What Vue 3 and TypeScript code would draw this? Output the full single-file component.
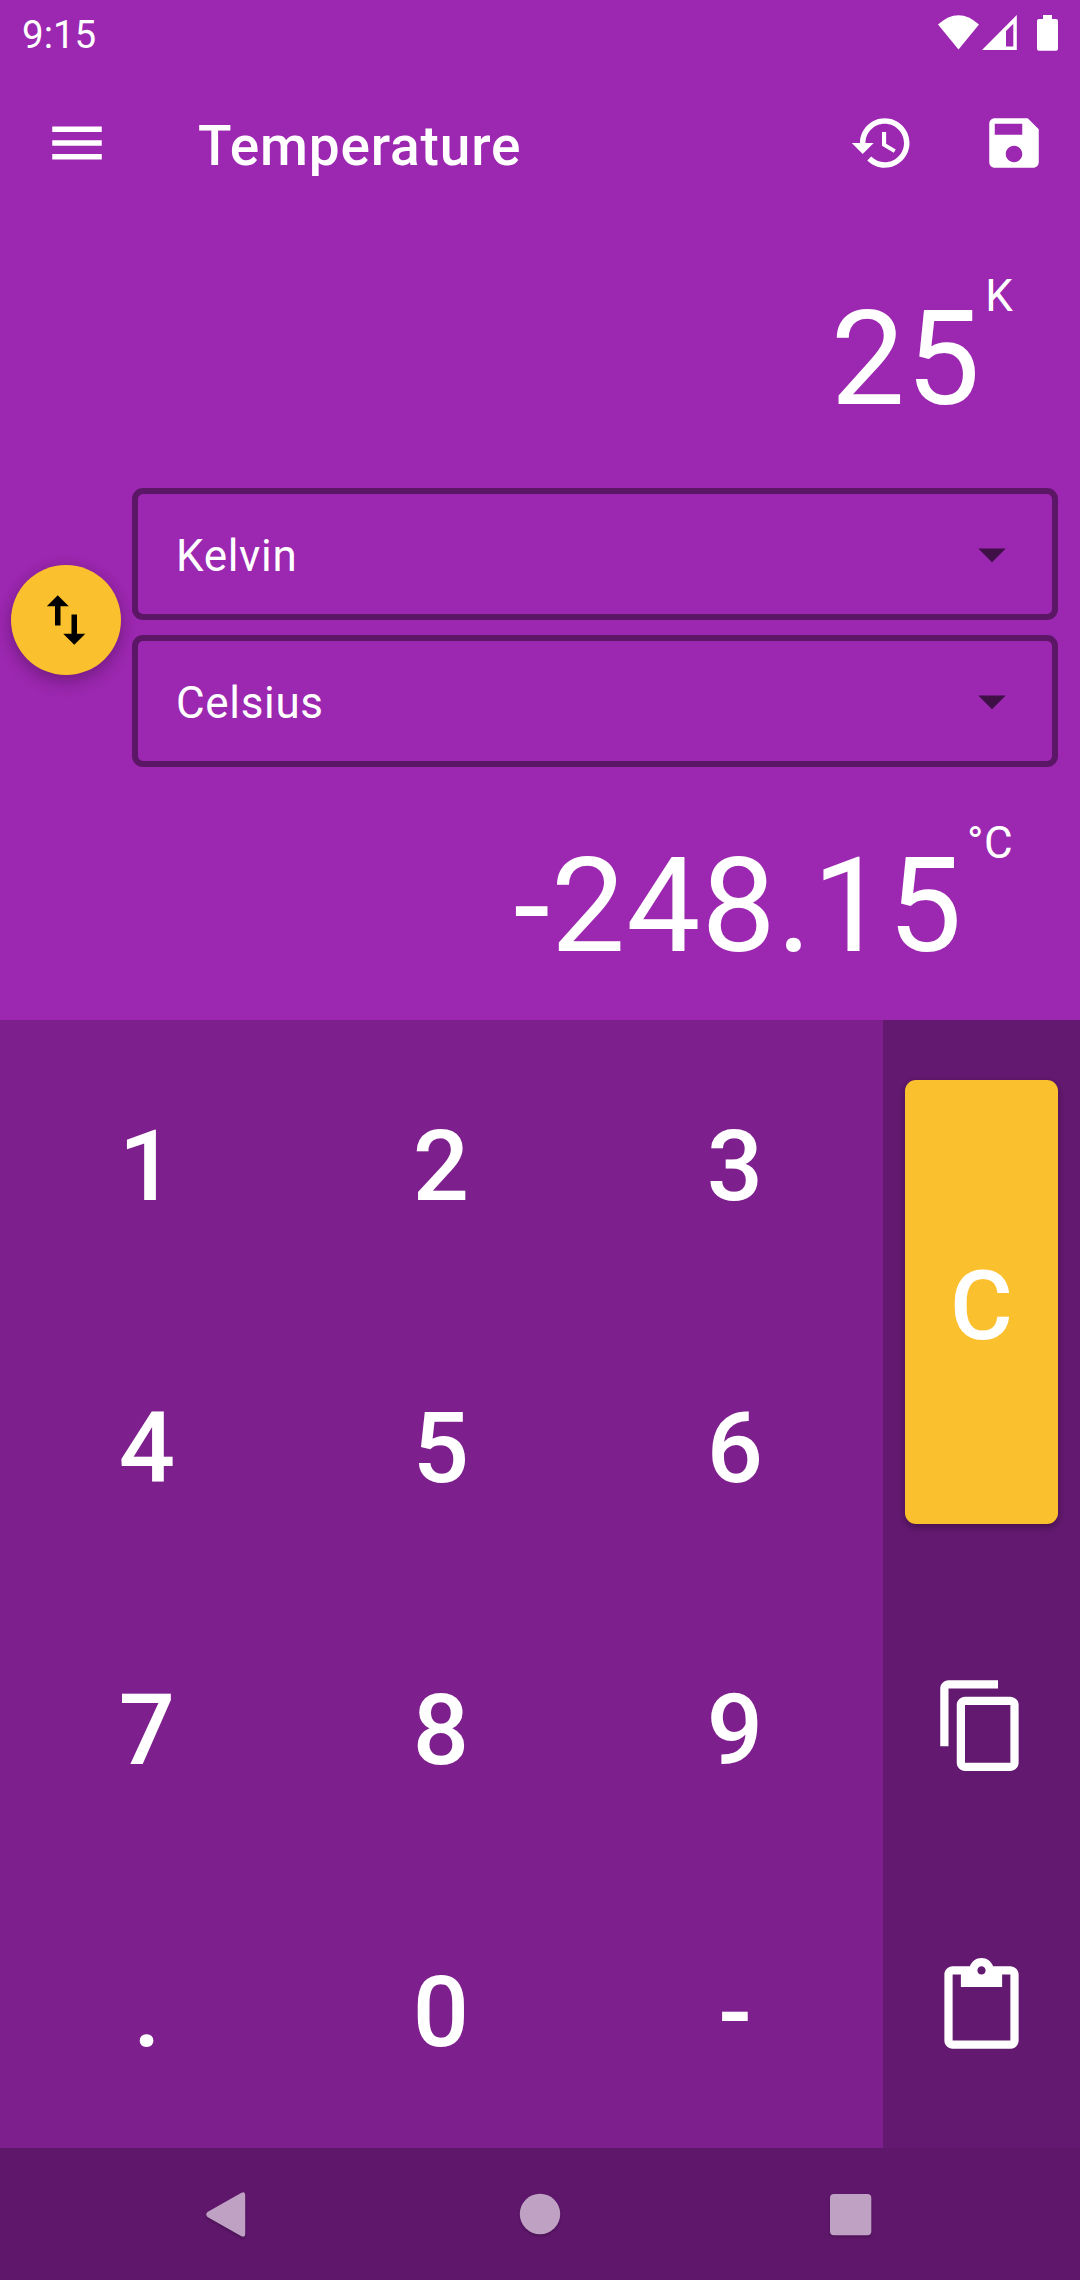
<script setup lang="ts">
const keys: string[] = ['1', '2', '3', '4', '5', '6', '7', '8', '9', '.', '0', '-']
const units: string[] = ['Kelvin', 'Celsius']
</script>

<template>
  <div class="screen">
    <header class="status">
      <span class="clock">9:15</span>
      <svg class="status-icons" width="128" height="66" viewBox="0 0 128 66" fill="#fff">
        <path d="M6 24.5Q26.5 6 47 24.5L26.5 49.5z" />
        <path fill-rule="evenodd" d="M50 50L84.8 15v35zM74 31v15.5h7.3V23.7z" />
        <path d="M111 15h9v4h4a2 2 0 0 1 2 2v27.700a2 2 0 0 1-2 2h-17a2 2 0 0 1-2-2V21a2 2 0 0 1 2-2h4z" />
      </svg>
    </header>

    <div class="toolbar">
      <svg class="icon" viewBox="0 0 24 24"><path d="M3 18h18v-2H3v2zm0-5h18v-2H3v2zm0-7v2h18V6H3z" /></svg>
      <h1 class="title">Temperature</h1>
      <svg class="icon history" viewBox="0 0 24 24"><path d="M13 3c-4.970 0-9 4.030-9 9H1l3.890 3.890.070.140L9 12H6c0-3.870 3.130-7 7-7s7 3.130 7 7-3.130 7-7 7c-1.930 0-3.680-.790-4.940-2.060l-1.420 1.420C8.270 19.990 10.510 21 13 21c4.970 0 9-4.030 9-9s-4.030-9-9-9zm-1 5v5l4.280 2.540.720-1.210-3.500-2.080V8H12z" /></svg>
      <svg class="icon" viewBox="0 0 24 24"><path d="M17 3H5c-1.110 0-2 .9-2 2v14c0 1.100.890 2 2 2h14c1.100 0 2-.9 2-2V7l-4-4zm-5 16c-1.660 0-3-1.340-3-3s1.340-3 3-3 3 1.340 3 3-1.340 3-3 3zm3-10H5V5h10v4z" /></svg>
    </div>

    <section class="readout source">
      <span class="value">25</span><span class="unit">K</span>
    </section>

    <section class="units">
      <button class="swap" aria-label="Swap units">
        <svg class="icon dark" viewBox="0 0 24 24"><path d="M9 3L5 6.990h3V14h2V6.990h3L9 3zm7 14.010V10h-2v7.010h-3L15 21l4-3.990h-3z" /></svg>
      </button>
      <div class="selects">
        <div v-for="name in units" :key="name" class="select">
          <span>{{ name }}</span>
          <svg class="icon caret" viewBox="0 0 24 24"><path d="M7 10l5 5 5-5z" /></svg>
        </div>
      </div>
    </section>

    <section class="readout result">
      <span class="value">-248.15</span><span class="unit">°C</span>
    </section>

    <main class="pad">
      <div class="keys">
        <button v-for="k in keys" :key="k" class="key">{{ k }}</button>
      </div>
      <aside class="side">
        <div class="clear-cell"><button class="clear">C</button></div>
        <button class="action" aria-label="Copy">
          <svg viewBox="0 0 24 24"><path d="M16 1H4c-1.100 0-2 .9-2 2v14h2V3h12V1zm3 4H8c-1.100 0-2 .9-2 2v14c0 1.100.9 2 2 2h11c1.100 0 2-.9 2-2V7c0-1.100-.9-2-2-2zm0 16H8V7h11v14z" /></svg>
        </button>
        <button class="action" aria-label="Paste">
          <svg viewBox="0 0 24 24"><path d="M19 2h-4.180C14.400.840 13.300 0 12 0c-1.300 0-2.400.840-2.820 2H5c-1.100 0-2 .9-2 2v16c0 1.100.9 2 2 2h14c1.100 0 2-.9 2-2V4c0-1.100-.9-2-2-2zm-7 0c.550 0 1 .450 1 1s-.450 1-1 1-1-.450-1-1 .450-1 1-1zm7 18H5V4h2v3h10V4h2v16z" /></svg>
        </button>
      </aside>
    </main>

    <nav class="navbar">
      <svg width="1080" height="132" viewBox="0 0 1080 132">
        <path d="M207.500 64Q205 66.500 207.500 69L241 88Q245.200 90 245.200 86V47Q245.200 43 241 45z" />
        <circle cx="540" cy="66" r="20.200" />
        <rect x="830" y="46" width="41.300" height="41.300" rx="4" />
      </svg>
    </nav>
  </div>
</template>

<style>
body { margin: 0; }
</style>

<style scoped>
.screen { width: 1080px; height: 2280px; display: flex; flex-direction: column; overflow: hidden; background: #9c27b0; color: #fff; font-family: Roboto, "Noto Sans", sans-serif; }
button { margin: 0; padding: 0; border: 0; background: none; color: inherit; font-family: inherit; }
svg { display: block; flex: none; }
.status { height: 66px; display: flex; justify-content: space-between; }
.clock { padding: 10px 0 0 22px; font-size: 38.5px; line-height: 50px; }
.status-icons { margin-right: 20px; }
.toolbar { height: 154px; display: flex; align-items: center; padding: 0 33px 0 44px; }
.icon { width: 66px; height: 66px; fill: #fff; }
.title { flex: 1; margin: 0 0 0 88px; padding-top: 6px; font-size: 55px; font-weight: 500; line-height: 66px; letter-spacing: 0.825px; }
.history { margin-right: 66px; }
.readout { box-sizing: border-box; display: flex; justify-content: flex-end; align-items: flex-start; padding-right: 66.6px; }
.source { height: 268px; }
.result { height: 253px; }
.value { margin-top: 62px; font-size: 132px; line-height: 155px; letter-spacing: 1.05px; }
.unit { margin: 50px 0 0 4px; font-size: 44px; line-height: 52px; letter-spacing: 0.66px; }
.units { display: flex; align-items: center; gap: 11px; padding: 0 22px 0 11px; }
.swap { width: 110px; height: 110px; margin-bottom: 15px; display: flex; align-items: center; justify-content: center; border-radius: 50%; background: #fbc02d; box-shadow: 0 8px 16px rgba(0, 0, 0, 0.2), 0 0 14px rgba(0, 0, 0, 0.1); }
.icon.dark { fill: #000; }
.selects { flex: 1; display: flex; flex-direction: column; gap: 15px; }
.select { box-sizing: border-box; height: 132px; display: flex; align-items: center; justify-content: space-between; padding: 0 26.600px 0 38px; border: 6px solid #5b1765; border-radius: 11px; font-size: 44px; line-height: 52px; letter-spacing: 0.66px; }
.select span { padding-top: 4px; }
.icon.caret { fill: #3e1046; }
.pad { height: 1128px; display: flex; }
.keys { width: 883px; display: grid; grid-template-columns: repeat(3, 294px); grid-template-rows: repeat(4, 282px); background: #7d1f8d; }
.key { padding-top: 10px; font-size: 99px; font-weight: 500; line-height: 116px; }
.side { flex: 1; display: flex; flex-direction: column; background: #62196f; }
.clear-cell { box-sizing: border-box; height: 564px; display: flex; padding: 60px 22px; }
.clear { flex: 1; padding-top: 8px; border-radius: 11px; background: #fbc02d; font-size: 96.25px; font-weight: 500; line-height: 112px; box-shadow: 0 4px 6px rgba(0, 0, 0, 0.2), 0 1px 5px rgba(0, 0, 0, 0.12); }
.action { height: 282px; display: flex; align-items: center; justify-content: center; }
.action svg { width: 99px; height: 99px; fill: #fff; }
.navbar { height: 132px; background: #5e176a; }
.navbar svg { fill: #bfa2c3; filter: drop-shadow(0 2px 1px rgba(0, 0, 0, 0.18)); }
</style>
